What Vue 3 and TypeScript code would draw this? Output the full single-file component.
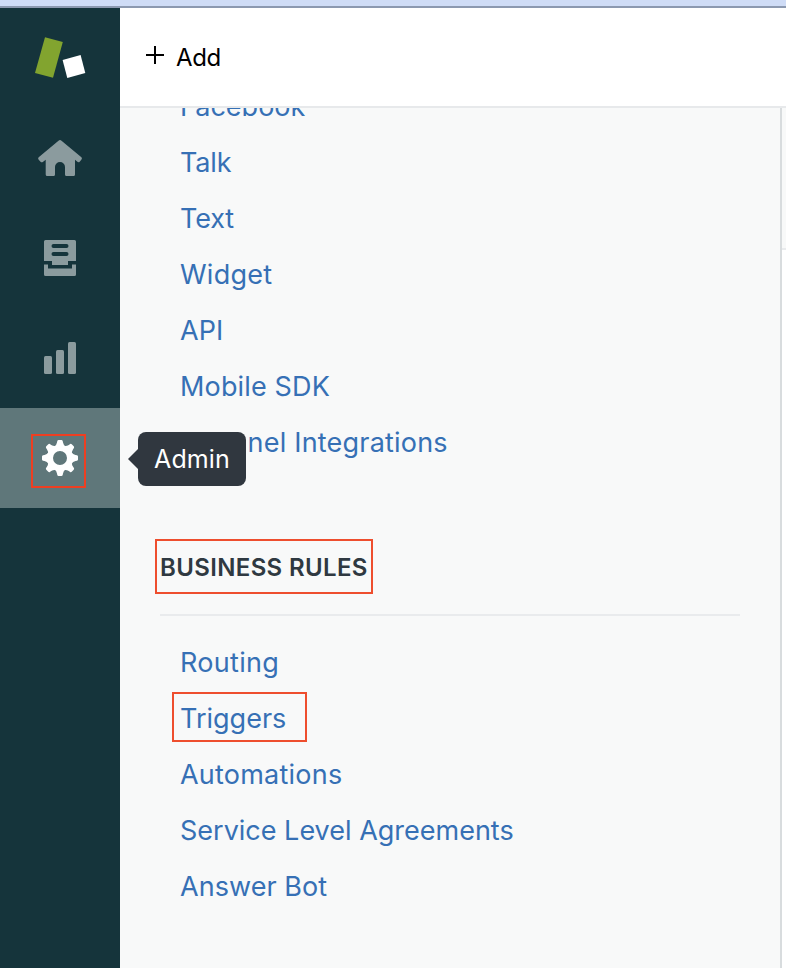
<script setup lang="ts">
interface Link {
  label: string
  spacing: number
  marked?: boolean
}

const channels: Link[] = [
  { label: 'Facebook', spacing: 0 },
  { label: 'Talk', spacing: -0.15 },
  { label: 'Text', spacing: -0.15 },
  { label: 'Widget', spacing: 0.25 },
  { label: 'API', spacing: 0.1 },
  { label: 'Mobile SDK', spacing: 0.15 },
  { label: 'Channel Integrations', spacing: 0.2 },
]

const rules: Link[] = [
  { label: 'Routing', spacing: 0.3 },
  { label: 'Triggers', spacing: 0, marked: true },
  { label: 'Automations', spacing: 0.22 },
  { label: 'Service Level Agreements', spacing: 0 },
  { label: 'Answer Bot', spacing: 0.05 },
]

const teeth: number[] = [0, 45, 90, 135, 180, 225, 270, 315]
</script>

<template>
  <div class="app">
    <div class="strip"></div>
    <div class="body">
      <nav class="sidebar">
        <div class="nav-item">
          <svg width="120" height="100" viewBox="0 0 120 100">
            <path d="M45 29.3 62.8 34 53 69.7 35 65Z" fill="#82a42f" />
            <path d="M62.6 52 80.6 47 85.3 65 67.3 70Z" fill="#fff" />
          </svg>
        </div>
        <a class="nav-item">
          <svg width="120" height="100" viewBox="0 0 120 100" fill="#8b9b9e">
            <path d="M58.5 32.7Q60 31.4 61.5 32.7L81.4 49.2Q82.5 50.3 81.5 51.5L79.7 53.7Q78.6 54.8 77.4 53.8L75 51.8V66.5Q75 68 73.5 68H66.5Q65 68 65 66.5V59A5 5 0 0 0 55 59V66.5Q55 68 53.5 68H47.2Q45.7 68 45.7 66.5V51.8L42.8 54Q41.6 54.8 40.5 53.7L38.5 51.5Q37.6 50.3 38.7 49.2Z" />
          </svg>
        </a>
        <a class="nav-item">
          <svg width="120" height="100" viewBox="0 0 120 100" fill="#8b9b9e">
            <path fill-rule="evenodd" d="M45.5 32H74.5Q76 32 76 33.5V53H68V57H52V53H44V33.5Q44 32 45.5 32ZM53.5 36A2 2 0 0 0 53.5 40H66.5A2 2 0 0 0 66.5 36ZM53.5 44A2 2 0 0 0 53.5 48H66.5A2 2 0 0 0 66.5 44Z" />
            <path d="M44 56.5H48V60.5H72V56.5H76V66.5Q76 68 74.5 68H45.5Q44 68 44 66.5Z" />
          </svg>
        </a>
        <a class="nav-item">
          <svg width="120" height="100" viewBox="0 0 120 100" fill="#8b9b9e">
            <rect x="44" y="48" width="8" height="18" rx="1.5" />
            <rect x="56" y="42" width="8" height="24" rx="1.5" />
            <rect x="68" y="34" width="8" height="32" rx="1.5" />
          </svg>
        </a>
        <a class="nav-item active">
          <svg width="120" height="100" viewBox="0 0 120 100">
            <g transform="translate(60 50)" fill="#fff">
              <circle r="10" fill="none" stroke="#fff" stroke-width="6" />
              <path
                v-for="angle in teeth"
                :key="angle"
                :transform="`rotate(${angle})`"
                d="M-5.4 -11.6Q-3.6 -12.8 -3 -15.5L-2.7 -17Q-2.4 -18 -1.4 -18H1.4Q2.4 -18 2.7 -17L3 -15.5Q3.6 -12.8 5.4 -11.6Z"
              />
            </g>
          </svg>
          <span class="mark mark-admin"></span>
          <span class="tooltip">Admin</span>
        </a>
      </nav>

      <div class="main">
        <header class="topbar">
          <svg class="plus" width="18" height="18" viewBox="0 0 18 18">
            <path d="M0 9H18M9 0V18" stroke="#000" stroke-width="2" />
          </svg>
          <span class="add">Add</span>
        </header>
        <div class="content">
          <section class="panel">
            <ul class="links channels">
              <li v-for="link in channels" :key="link.label">
                <a :style="{ letterSpacing: link.spacing + 'px' }">{{ link.label }}</a>
              </li>
            </ul>
            <h2 class="heading">
              <span>BUSINESS RULES</span>
              <i class="mark mark-heading"></i>
            </h2>
            <ul class="links rules">
              <li v-for="link in rules" :key="link.label">
                <a :style="{ letterSpacing: link.spacing + 'px' }">{{ link.label }}</a>
                <i v-if="link.marked" class="mark mark-link"></i>
              </li>
            </ul>
          </section>
          <aside class="side">
            <div class="side-head"></div>
          </aside>
        </div>
      </div>
    </div>
  </div>
</template>

<style>
body {
  margin: 0;
  background: #fff;
}
</style>

<style scoped>
.app {
  display: flex;
  flex-direction: column;
  height: 968px;
  overflow: hidden;
  font-family: Inter, 'Liberation Sans', sans-serif;
}
.strip {
  box-sizing: border-box;
  flex: none;
  height: 8px;
  background: #cfdcf6;
  border-bottom: 2px solid #8c99b0;
}
.body {
  display: flex;
  flex: 1;
  min-height: 0;
}
.sidebar {
  position: relative;
  z-index: 2;
  flex: none;
  width: 120px;
  background: #15343b;
}
.nav-item {
  position: relative;
  display: block;
  height: 100px;
}
.nav-item svg {
  display: block;
}
.active {
  background: #5f777a;
}
.tooltip {
  position: absolute;
  left: 138px;
  top: 24px;
  width: 108px;
  height: 54px;
  border-radius: 8px;
  background: #30373f;
  color: #fff;
  font-size: 25px;
  line-height: 54px;
  letter-spacing: 0.1px;
  text-align: center;
}
.tooltip::before {
  content: '';
  position: absolute;
  left: -10px;
  top: 17px;
  border: solid transparent;
  border-width: 10px 10px 10px 0;
  border-right-color: #30373f;
}
.mark {
  position: absolute;
  box-sizing: border-box;
  border: 2px solid #ee4e2e;
}
.mark-admin {
  left: 31px;
  top: 26px;
  width: 55px;
  height: 54px;
  border-color: #ee3f22;
}
.mark-heading {
  left: -5px;
  top: 19px;
  width: 218px;
  height: 55px;
}
.mark-link {
  left: -8px;
  top: 2px;
  width: 135px;
  height: 50px;
}
.main {
  display: flex;
  flex: 1;
  flex-direction: column;
  min-width: 0;
}
.topbar {
  display: flex;
  box-sizing: border-box;
  flex: none;
  align-items: center;
  height: 100px;
  padding-left: 26px;
  border-bottom: 2px solid #e7e9eb;
  background: #fff;
}
.plus {
  margin: 0 12px 4px 0;
}
.add {
  padding-top: 2px;
  color: #000;
  font-size: 24px;
  line-height: 32px;
  letter-spacing: -0.4px;
}
.content {
  display: flex;
  flex: 1;
  min-height: 0;
}
.panel {
  box-sizing: border-box;
  flex: none;
  width: 662px;
  padding: 0 40px;
  overflow: hidden;
  border-right: 2px solid #d8dcde;
  background: #f8f9f9;
}
.links {
  margin: 0;
  padding: 0 0 0 20px;
  list-style: none;
}
.links li {
  position: relative;
  height: 56px;
  color: #3670b5;
  font-size: 27px;
  line-height: 58px;
  white-space: nowrap;
}
.channels {
  margin-top: -30px;
}
.heading {
  position: relative;
  box-sizing: border-box;
  height: 96px;
  margin: 50px 0 18px;
  padding-top: 32px;
  border-bottom: 2px solid #e9ebed;
  color: #2f3941;
  font-size: 24px;
  font-weight: 600;
  line-height: 32px;
  letter-spacing: 0.36px;
  white-space: nowrap;
}
.side {
  flex: 1;
  background: #fff;
}
.side-head {
  box-sizing: border-box;
  height: 142px;
  border-bottom: 2px solid #e9ebed;
  background: #f8f9f9;
}
</style>
